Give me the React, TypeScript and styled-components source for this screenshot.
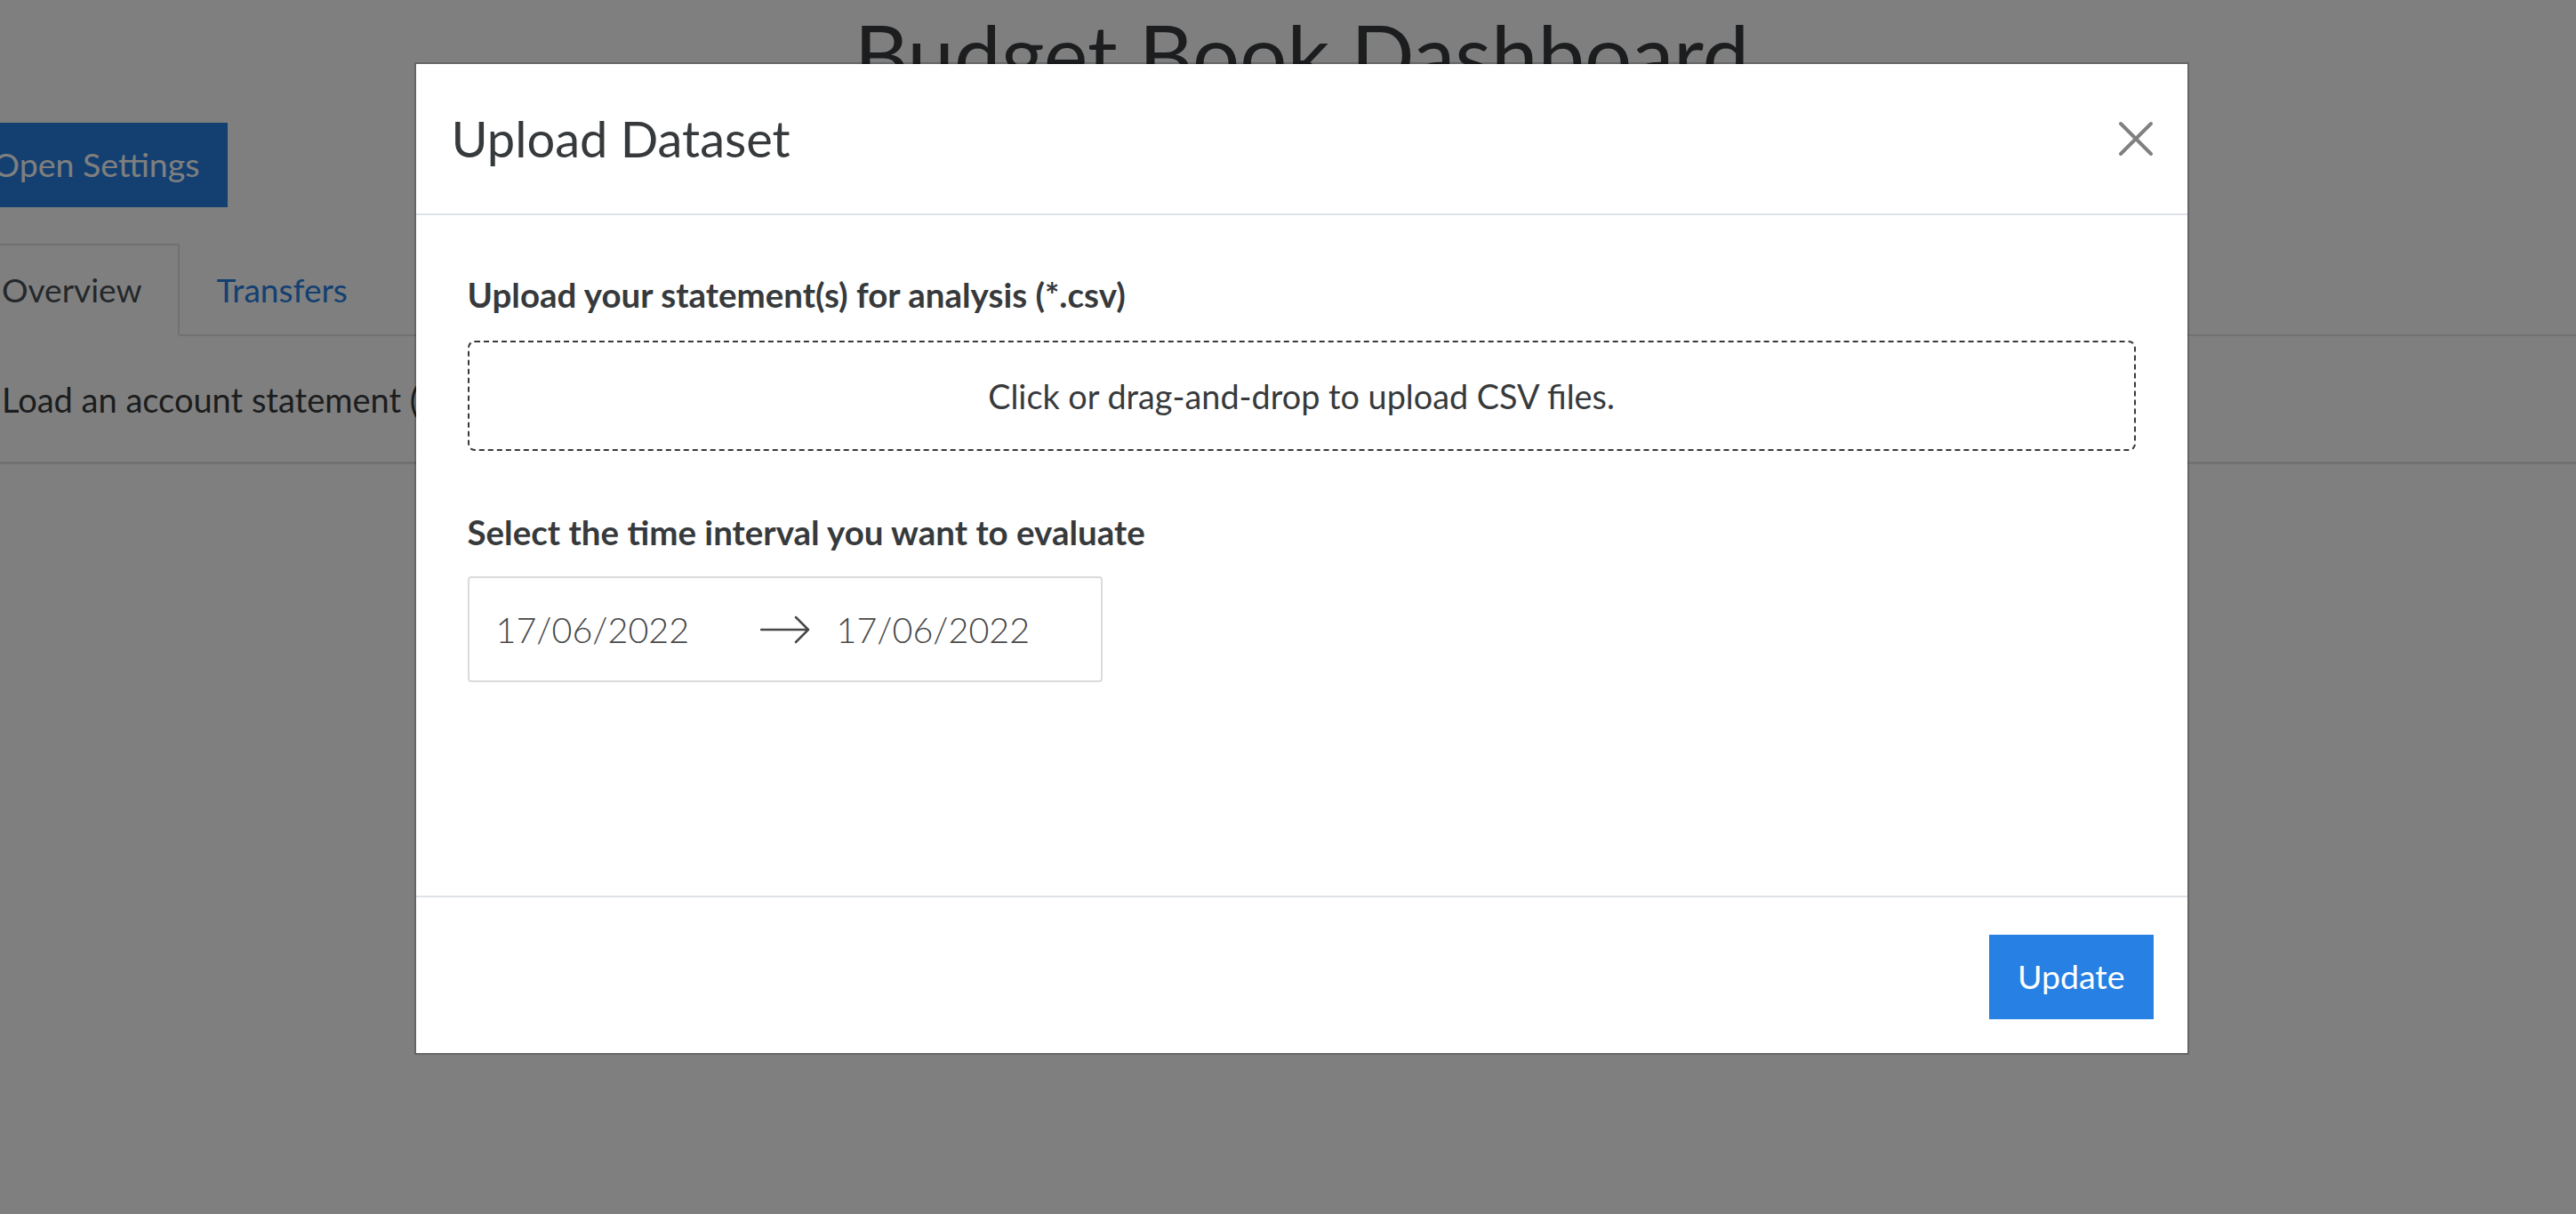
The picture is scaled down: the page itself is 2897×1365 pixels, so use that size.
import React from 'react';
import styled, { createGlobalStyle } from 'styled-components';

const GlobalStyle = createGlobalStyle`
  html, body {
    margin: 0;
    padding: 0;
    background: #fff;
    overflow: hidden;
  }

  body {
    font-family: Lato, "Open Sans", sans-serif;
    color: #373a3c;
  }

  * {
    box-sizing: border-box;
  }
`;

// dashboard behind the modal (page is scrolled a little to the right)
const Page = styled.div`
  width: 3008px;
  margin-left: -40px;
`;

const Title = styled.h1`
  margin: 0 0 18px;
  text-align: center;
  font-size: 94px;
  font-weight: 400;
  line-height: 120px;
  white-space: nowrap;
`;

const Button = styled.button`
  display: inline-block;
  padding: 15px 30px 16px;
  border: 2px solid #2780e3;
  border-radius: 0;
  background: #2780e3;
  color: #fff;
  font-family: inherit;
  font-size: 37.5px;
  line-height: 60px;
  cursor: pointer;
`;

const Tabs = styled.nav`
  display: flex;
  margin-top: 41px;
  border-bottom: 2px solid #dee2e6;
`;

const Tab = styled.a<{ $active?: boolean }>`
  display: block;
  margin-bottom: -2px;
  padding: 20px 40px;
  border: 2px solid transparent;
  border-color: ${(p) => (p.$active ? '#dee2e6 #dee2e6 #fff' : 'transparent')};
  background: ${(p) => (p.$active ? '#fff' : 'transparent')};
  color: ${(p) => (p.$active ? '#495057' : '#2780e3')};
  font-size: 37px;
  line-height: 60px;
  text-decoration: none;
`;

const TabContent = styled.div`
  padding: 41px 0 40px 42px;
  border-bottom: 3px solid #dee2e6;
  font-size: 38px;
  line-height: 60px;
  white-space: nowrap;
`;

// modal
const Backdrop = styled.div`
  position: fixed;
  inset: 0;
  display: flex;
  justify-content: center;
  align-items: flex-start;
  padding: 70px 0 0 30px;
  background: rgba(0, 0, 0, 0.5);
`;

const Dialog = styled.div`
  width: 1996px;
  flex-shrink: 0;
  display: flex;
  flex-direction: column;
  background: #fff;
  background-clip: padding-box;
  border: 2px solid rgba(0, 0, 0, 0.2);
`;

const Header = styled.div`
  display: flex;
  align-items: center;
  justify-content: space-between;
  padding: 40px 38px 40px 40px;
  border-bottom: 2px solid #dee2e6;
`;

const ModalTitle = styled.h4`
  margin: 0;
  font-size: 56px;
  font-weight: 400;
  line-height: 88px;
  color: #373a3c;
`;

const CloseButton = styled.button`
  display: flex;
  padding: 0;
  border: none;
  background: none;
  cursor: pointer;
`;

const Body = styled.div`
  min-height: 765px;
  padding: 59px 58px 58px;
`;

const Label = styled.div<{ $gap?: number }>`
  margin-bottom: ${(p) => p.$gap ?? 20}px;
  font-size: 38.5px;
  font-weight: 700;
  line-height: 60px;
`;

const DropZone = styled.div`
  height: 124px;
  display: flex;
  align-items: center;
  justify-content: center;
  margin-bottom: 61px;
  border: 2px dashed #373a3c;
  border-radius: 8px;
  font-size: 37.8px;
  cursor: pointer;
`;

const DateRange = styled.div`
  width: 714px;
  height: 119px;
  display: flex;
  align-items: center;
  border: 2px solid #dbdbdb;
  border-radius: 4px;
`;

const DateInput = styled.div`
  width: 327px;
  padding-left: 30px;
  color: #484848;
  font-size: 39.5px;
  font-weight: 300;
`;

const Footer = styled.div`
  display: flex;
  justify-content: flex-end;
  padding: 42px 38px 38px;
  border-top: 2px solid #dee2e6;
`;

const CloseIcon = () => (
  <svg width="40" height="40" viewBox="0 0 40 40">
    <path d="M3 3L37 37M37 3L3 37" stroke="#808080" strokeWidth="4" strokeLinecap="round" />
  </svg>
);

const ArrowIcon = () => (
  <svg width="56" height="32" viewBox="0 0 56 32" style={{ flexShrink: 0 }}>
    <path d="M1 16H54M40 2L54 16L40 30" fill="none" stroke="#484848" strokeWidth="2.5" strokeLinecap="round" strokeLinejoin="round" />
  </svg>
);

const App: React.FC = () => {
  const start = '17/06/2022';
  const end = '17/06/2022';

  return (
    <>
      <GlobalStyle />
      <Page>
        <Title>Budget Book Dashboard</Title>
        <Button>Open Settings</Button>
        <Tabs>
          <Tab $active>Overview</Tab>
          <Tab>Transfers</Tab>
        </Tabs>
        <TabContent>
          Load an account statement (*.csv) via the settings to see an overview of your finances.
        </TabContent>
      </Page>

      <Backdrop>
        <Dialog>
          <Header>
            <ModalTitle>Upload Dataset</ModalTitle>
            <CloseButton aria-label="Close">
              <CloseIcon />
            </CloseButton>
          </Header>
          <Body>
            <Label $gap={22}>Upload your statement(s) for analysis (*.csv)</Label>
            <DropZone>Click or drag-and-drop to upload CSV files.</DropZone>
            <Label>Select the time interval you want to evaluate</Label>
            <DateRange>
              <DateInput>{start}</DateInput>
              <ArrowIcon />
              <DateInput>{end}</DateInput>
            </DateRange>
          </Body>
          <Footer>
            <Button>Update</Button>
          </Footer>
        </Dialog>
      </Backdrop>
    </>
  );
};

export default App;
